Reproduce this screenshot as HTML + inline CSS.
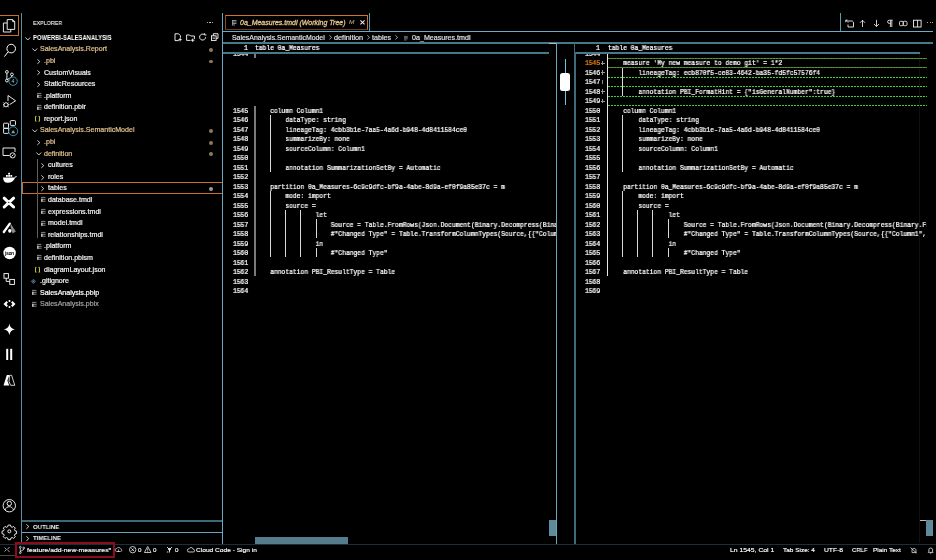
<!DOCTYPE html>
<html><head><meta charset="utf-8"><title>0a_Measures.tmdl (Working Tree)</title>
<style>
html,body{margin:0;padding:0;background:#000;width:936px;height:560px;overflow:hidden}
body{position:relative;font-family:"Liberation Sans",sans-serif;font-kerning:none}
div,svg{position:absolute;box-sizing:border-box}
svg{overflow:visible}
.t{will-change:transform}
</style></head><body>
<div style="left:21px;top:13px;width:1px;height:531px;background:#5a8fa3"></div>
<div style="left:222px;top:13px;width:1px;height:531px;background:#68a8c2"></div>
<div style="left:222px;top:31px;width:711px;height:1px;background:#68aec8"></div>
<div style="left:369px;top:13px;width:1px;height:18px;background:#5a9ab2"></div>
<div style="left:840px;top:13px;width:1px;height:18px;background:#5a9ab2"></div>
<div style="left:223px;top:42px;width:710px;height:1.7px;background:#47788c"></div>
<div style="left:556px;top:43px;width:1px;height:501px;background:#68a5be"></div>
<div style="left:574px;top:43px;width:1.6px;height:501px;background:#3f6a7c"></div>
<div style="left:22px;top:520.1px;width:200px;height:1.8px;background:#3d6878"></div>
<div style="left:22px;top:532px;width:200px;height:1px;background:#68a5bd"></div>
<div style="left:0px;top:544px;width:936px;height:1px;background:#1a3038"></div>
<div style="left:225px;top:15px;width:143px;height:14.5px;border:1px solid #cf7326;border-bottom-color:#6e3c14;border-left-color:#8a4c1c"></div>
<svg style="left:232px;top:20px" width="4.5" height="5" viewBox="0 0 4.5 5" fill="none" stroke="#9a9a9a" stroke-width="0.9"><path d="M0 0.5h4.5M0 2h4.5M0 3.5h4.5M0 5h3M0.5 0v5"/></svg>
<div class=t style="left:240.2px;top:16px;font:italic 400 6.69px/13.37px Liberation Sans;color:#e2c08d;white-space:pre;-webkit-text-stroke:0.3px #e2c08d;transform:scaleX(1.0450);transform-origin:0 0;">0a_Measures.tmdl (Working Tree)</div>
<div class=t style="left:349.2px;top:16.77px;font:italic 400 5.81px/11.63px Liberation Sans;color:#b09870;white-space:pre;-webkit-text-stroke:0.15px #b09870;transform:scaleX(1.1150);transform-origin:0 0;">M</div>
<svg style="left:360px;top:20.2px" width="5" height="4.8" viewBox="0 0 5 4.8" fill="none" stroke="#ececec" stroke-width="1.05"><path d="M0.4 0.4L4.6 4.4M4.6 0.4L0.4 4.4"/></svg>
<div class=t style="left:231.5px;top:31.99px;font:400 6.4px/12.79px Liberation Sans;color:#e6e6e6;white-space:pre;-webkit-text-stroke:0.15px #e6e6e6;transform:scaleX(1.0833);transform-origin:0 0;">SalesAnalysis.SemanticModel</div>
<svg style="left:328.5px;top:35.3px" width="3" height="4.8" viewBox="0 0 3 4.8" fill="none" stroke="#d0d0d0" stroke-width="0.75"><path d="M0.4 0.4L2.6 2.4L0.4 4.4"/></svg>
<div class=t style="left:333.9px;top:31.99px;font:400 6.4px/12.79px Liberation Sans;color:#e6e6e6;white-space:pre;-webkit-text-stroke:0.15px #e6e6e6;transform:scaleX(1.1406);transform-origin:0 0;">definition</div>
<svg style="left:367px;top:35.3px" width="3" height="4.8" viewBox="0 0 3 4.8" fill="none" stroke="#d0d0d0" stroke-width="0.75"><path d="M0.4 0.4L2.6 2.4L0.4 4.4"/></svg>
<div class=t style="left:372.2px;top:31.99px;font:400 6.4px/12.79px Liberation Sans;color:#e6e6e6;white-space:pre;-webkit-text-stroke:0.15px #e6e6e6;transform:scaleX(1.1133);transform-origin:0 0;">tables</div>
<svg style="left:395px;top:35.3px" width="3" height="4.8" viewBox="0 0 3 4.8" fill="none" stroke="#d0d0d0" stroke-width="0.75"><path d="M0.4 0.4L2.6 2.4L0.4 4.4"/></svg>
<svg style="left:404.4px;top:35.8px" width="3.8" height="4.4" viewBox="0 0 3.8 4.4" fill="none" stroke="#aaa" stroke-width="0.6"><path d="M0 0.4h3.8M0 1.6h3.8M0 2.8h3.8M0 4h2.6"/></svg>
<div class=t style="left:411.8px;top:31.99px;font:400 6.4px/12.79px Liberation Sans;color:#e6e6e6;white-space:pre;-webkit-text-stroke:0.15px #e6e6e6;transform:scaleX(1.1139);transform-origin:0 0;">0a_Measures.tmdl</div>
<svg style="left:844.5px;top:18.5px" width="9" height="9" viewBox="0 0 9 9" fill="none" stroke="#fff" stroke-width="0.85"><path d="M3 2h4.3l1.2 1.2V8H3V5.5"/><path d="M0.8 1.2L3.2 3.6M0.8 1.2h2M0.8 1.2v2"/></svg>
<svg style="left:858.6px;top:18.5px" width="7" height="9" viewBox="0 0 7 9" fill="none" stroke="#fff" stroke-width="0.8"><path d="M3.5 8V1.3M1 3.8l2.5-2.5L6 3.8"/></svg>
<svg style="left:872.8px;top:18.5px" width="7" height="9" viewBox="0 0 7 9" fill="none" stroke="#fff" stroke-width="0.8"><path d="M3.5 0.8v6.7M1 5l2.5 2.5L6 5"/></svg>
<svg style="left:886px;top:18.5px" width="7" height="9" viewBox="0 0 7 9" fill="none" stroke="#fff" stroke-width="0.8"><path d="M4.4 1.2v6.8M5.8 1.2v6.8M6.6 1.2H3.2a1.6 1.6 0 0 0 0 3.2h1.2"/></svg>
<svg style="left:899px;top:18.5px" width="9" height="9" viewBox="0 0 9 9" fill="none" stroke="#fff" stroke-width="0.8"><rect x="0.5" y="2.3" width="3.8" height="4.4" rx="1.1"/><rect x="4.2" y="2.3" width="3.8" height="4.4" rx="1.1"/></svg>
<svg style="left:913px;top:18.5px" width="9" height="9" viewBox="0 0 9 9" fill="none" stroke="#fff" stroke-width="0.85"><rect x="0.5" y="1.2" width="7.6" height="6.8"/><path d="M4.6 1.2v6.8"/></svg>
<div style="left:927.2px;top:21.8px;width:1.2px;height:1.2px;background:#ddd;border-radius:50%"></div>
<div style="left:929.5px;top:21.8px;width:1.2px;height:1.2px;background:#ddd;border-radius:50%"></div>
<div style="left:931.8px;top:21.8px;width:1.2px;height:1.2px;background:#ddd;border-radius:50%"></div>
<div style="left:223px;top:43px;width:333px;height:501px;overflow:hidden">
<div class=t style="left:9.84px;top:4.99px;font:400 6.76px/13.51px Liberation Mono;color:#fff;white-space:pre;-webkit-text-stroke:0.24px #fff;transform:scaleX(0.9350);transform-origin:0 0;">1544</div>
<div style="left:31.2px;top:5.78px;width:1.8px;height:9.48px;background:#7a7a7a"></div>
<div style="left:31.2px;top:62.66px;width:1.8px;height:170.64px;background:#7a7a7a"></div>
<div class=t style="left:9.84px;top:61.87px;font:400 6.76px/13.51px Liberation Mono;color:#fff;white-space:pre;-webkit-text-stroke:0.24px #fff;transform:scaleX(0.9350);transform-origin:0 0;">1545</div>
<div class=t style="left:32px;top:61.87px;font:400 6.76px/13.51px Liberation Mono;color:#fff;white-space:pre;-webkit-text-stroke:0.24px #fff;transform:scaleX(0.9350);transform-origin:0 0;">    column Column1</div>
<div class=t style="left:9.84px;top:71.35px;font:400 6.76px/13.51px Liberation Mono;color:#fff;white-space:pre;-webkit-text-stroke:0.24px #fff;transform:scaleX(0.9350);transform-origin:0 0;">1546</div>
<div class=t style="left:32px;top:71.35px;font:400 6.76px/13.51px Liberation Mono;color:#fff;white-space:pre;-webkit-text-stroke:0.24px #fff;transform:scaleX(0.9350);transform-origin:0 0;">        dataType: string</div>
<div class=t style="left:9.84px;top:80.83px;font:400 6.76px/13.51px Liberation Mono;color:#fff;white-space:pre;-webkit-text-stroke:0.24px #fff;transform:scaleX(0.9350);transform-origin:0 0;">1547</div>
<div class=t style="left:32px;top:80.83px;font:400 6.76px/13.51px Liberation Mono;color:#fff;white-space:pre;-webkit-text-stroke:0.24px #fff;transform:scaleX(0.9350);transform-origin:0 0;">        lineageTag: 4cbb3b1e-7aa5-4a6d-b948-4d8411584ce0</div>
<div class=t style="left:9.84px;top:90.31px;font:400 6.76px/13.51px Liberation Mono;color:#fff;white-space:pre;-webkit-text-stroke:0.24px #fff;transform:scaleX(0.9350);transform-origin:0 0;">1548</div>
<div class=t style="left:32px;top:90.31px;font:400 6.76px/13.51px Liberation Mono;color:#fff;white-space:pre;-webkit-text-stroke:0.24px #fff;transform:scaleX(0.9350);transform-origin:0 0;">        summarizeBy: none</div>
<div class=t style="left:9.84px;top:99.79px;font:400 6.76px/13.51px Liberation Mono;color:#fff;white-space:pre;-webkit-text-stroke:0.24px #fff;transform:scaleX(0.9350);transform-origin:0 0;">1549</div>
<div class=t style="left:32px;top:99.79px;font:400 6.76px/13.51px Liberation Mono;color:#fff;white-space:pre;-webkit-text-stroke:0.24px #fff;transform:scaleX(0.9350);transform-origin:0 0;">        sourceColumn: Column1</div>
<div class=t style="left:9.84px;top:109.27px;font:400 6.76px/13.51px Liberation Mono;color:#fff;white-space:pre;-webkit-text-stroke:0.24px #fff;transform:scaleX(0.9350);transform-origin:0 0;">1550</div>
<div class=t style="left:9.84px;top:118.75px;font:400 6.76px/13.51px Liberation Mono;color:#fff;white-space:pre;-webkit-text-stroke:0.24px #fff;transform:scaleX(0.9350);transform-origin:0 0;">1551</div>
<div class=t style="left:32px;top:118.75px;font:400 6.76px/13.51px Liberation Mono;color:#fff;white-space:pre;-webkit-text-stroke:0.24px #fff;transform:scaleX(0.9350);transform-origin:0 0;">        annotation SummarizationSetBy = Automatic</div>
<div class=t style="left:9.84px;top:128.23px;font:400 6.76px/13.51px Liberation Mono;color:#fff;white-space:pre;-webkit-text-stroke:0.24px #fff;transform:scaleX(0.9350);transform-origin:0 0;">1552</div>
<div class=t style="left:9.84px;top:137.71px;font:400 6.76px/13.51px Liberation Mono;color:#fff;white-space:pre;-webkit-text-stroke:0.24px #fff;transform:scaleX(0.9350);transform-origin:0 0;">1553</div>
<div class=t style="left:32px;top:137.71px;font:400 6.76px/13.51px Liberation Mono;color:#fff;white-space:pre;-webkit-text-stroke:0.24px #fff;transform:scaleX(0.9350);transform-origin:0 0;">    partition 0a_Measures-6c9c9dfc-bf9a-4abe-8d9a-ef0f9a85e37c = m</div>
<div class=t style="left:9.84px;top:147.19px;font:400 6.76px/13.51px Liberation Mono;color:#fff;white-space:pre;-webkit-text-stroke:0.24px #fff;transform:scaleX(0.9350);transform-origin:0 0;">1554</div>
<div class=t style="left:32px;top:147.19px;font:400 6.76px/13.51px Liberation Mono;color:#fff;white-space:pre;-webkit-text-stroke:0.24px #fff;transform:scaleX(0.9350);transform-origin:0 0;">        mode: import</div>
<div class=t style="left:9.84px;top:156.67px;font:400 6.76px/13.51px Liberation Mono;color:#fff;white-space:pre;-webkit-text-stroke:0.24px #fff;transform:scaleX(0.9350);transform-origin:0 0;">1555</div>
<div class=t style="left:32px;top:156.67px;font:400 6.76px/13.51px Liberation Mono;color:#fff;white-space:pre;-webkit-text-stroke:0.24px #fff;transform:scaleX(0.9350);transform-origin:0 0;">        source =</div>
<div class=t style="left:9.84px;top:166.15px;font:400 6.76px/13.51px Liberation Mono;color:#fff;white-space:pre;-webkit-text-stroke:0.24px #fff;transform:scaleX(0.9350);transform-origin:0 0;">1556</div>
<div class=t style="left:32px;top:166.15px;font:400 6.76px/13.51px Liberation Mono;color:#fff;white-space:pre;-webkit-text-stroke:0.24px #fff;transform:scaleX(0.9350);transform-origin:0 0;">                let</div>
<div class=t style="left:9.84px;top:175.63px;font:400 6.76px/13.51px Liberation Mono;color:#fff;white-space:pre;-webkit-text-stroke:0.24px #fff;transform:scaleX(0.9350);transform-origin:0 0;">1557</div>
<div class=t style="left:32px;top:175.63px;font:400 6.76px/13.51px Liberation Mono;color:#fff;white-space:pre;-webkit-text-stroke:0.24px #fff;transform:scaleX(0.9350);transform-origin:0 0;">                    Source = Table.FromRows(Json.Document(Binary.Decompress(Binary.FromText(&quot;i45WMlSK1YlWMjIDAA==&quot;, BinaryEncoding.Base64), Compression.Deflate)), let _t = ((type nullable text) meta [Serialized.Text = true]) in type table [Column1 = _t])</div>
<div class=t style="left:9.84px;top:185.11px;font:400 6.76px/13.51px Liberation Mono;color:#fff;white-space:pre;-webkit-text-stroke:0.24px #fff;transform:scaleX(0.9350);transform-origin:0 0;">1558</div>
<div class=t style="left:32px;top:185.11px;font:400 6.76px/13.51px Liberation Mono;color:#fff;white-space:pre;-webkit-text-stroke:0.24px #fff;transform:scaleX(0.9350);transform-origin:0 0;">                    #&quot;Changed Type&quot; = Table.TransformColumnTypes(Source,{{&quot;Column1&quot;, type text}})</div>
<div class=t style="left:9.84px;top:194.59px;font:400 6.76px/13.51px Liberation Mono;color:#fff;white-space:pre;-webkit-text-stroke:0.24px #fff;transform:scaleX(0.9350);transform-origin:0 0;">1559</div>
<div class=t style="left:32px;top:194.59px;font:400 6.76px/13.51px Liberation Mono;color:#fff;white-space:pre;-webkit-text-stroke:0.24px #fff;transform:scaleX(0.9350);transform-origin:0 0;">                in</div>
<div class=t style="left:9.84px;top:204.07px;font:400 6.76px/13.51px Liberation Mono;color:#fff;white-space:pre;-webkit-text-stroke:0.24px #fff;transform:scaleX(0.9350);transform-origin:0 0;">1560</div>
<div class=t style="left:32px;top:204.07px;font:400 6.76px/13.51px Liberation Mono;color:#fff;white-space:pre;-webkit-text-stroke:0.24px #fff;transform:scaleX(0.9350);transform-origin:0 0;">                    #&quot;Changed Type&quot;</div>
<div class=t style="left:9.84px;top:213.55px;font:400 6.76px/13.51px Liberation Mono;color:#fff;white-space:pre;-webkit-text-stroke:0.24px #fff;transform:scaleX(0.9350);transform-origin:0 0;">1561</div>
<div class=t style="left:9.84px;top:223.03px;font:400 6.76px/13.51px Liberation Mono;color:#fff;white-space:pre;-webkit-text-stroke:0.24px #fff;transform:scaleX(0.9350);transform-origin:0 0;">1562</div>
<div class=t style="left:32px;top:223.03px;font:400 6.76px/13.51px Liberation Mono;color:#fff;white-space:pre;-webkit-text-stroke:0.24px #fff;transform:scaleX(0.9350);transform-origin:0 0;">    annotation PBI_ResultType = Table</div>
<div class=t style="left:9.84px;top:232.51px;font:400 6.76px/13.51px Liberation Mono;color:#fff;white-space:pre;-webkit-text-stroke:0.24px #fff;transform:scaleX(0.9350);transform-origin:0 0;">1563</div>
<div class=t style="left:9.84px;top:241.99px;font:400 6.76px/13.51px Liberation Mono;color:#fff;white-space:pre;-webkit-text-stroke:0.24px #fff;transform:scaleX(0.9350);transform-origin:0 0;">1564</div>
<div style="left:47.06px;top:72.14px;width:0.9px;height:56.88px;background:#d8d8d8"></div>
<div style="left:47.06px;top:147.98px;width:0.9px;height:66.36px;background:#d8d8d8"></div>
<div style="left:62.22px;top:166.94px;width:0.9px;height:47.4px;background:#d8d8d8"></div>
<div style="left:77.38px;top:166.94px;width:0.9px;height:47.4px;background:#d8d8d8"></div>
<div style="left:92.54px;top:176.42px;width:0.9px;height:18.96px;background:#d8d8d8"></div>
<div style="left:92.54px;top:204.86px;width:0.9px;height:9.48px;background:#d8d8d8"></div>
<div style="left:0px;top:0.7px;width:333px;height:8.3px;background:#000"></div>
<div class=t style="left:21.21px;top:-0.69px;font:400 6.76px/13.51px Liberation Mono;color:#fff;white-space:pre;-webkit-text-stroke:0.24px #fff;transform:scaleX(0.9350);transform-origin:0 0;">1</div>
<div class=t style="left:32px;top:-0.69px;font:400 6.76px/13.51px Liberation Mono;color:#fff;white-space:pre;-webkit-text-stroke:0.24px #fff;transform:scaleX(0.9350);transform-origin:0 0;">table 0a_Measures</div>
</div>
<div style="left:223px;top:52px;width:326px;height:1.8px;background:#47788c"></div>
<div style="left:919px;top:53px;width:0.6px;height:490px;background:#101010"></div>
<div style="left:575px;top:43px;width:352px;height:501px;overflow:hidden">
<div class=t style="left:9.94px;top:4.99px;font:400 6.76px/13.51px Liberation Mono;color:#fff;white-space:pre;-webkit-text-stroke:0.24px #fff;transform:scaleX(0.9350);transform-origin:0 0;">1544</div>
<div class=t style="left:9.94px;top:14.47px;font:400 6.76px/13.51px Liberation Mono;color:#f38518;white-space:pre;-webkit-text-stroke:0.24px #f38518;transform:scaleX(0.9350);transform-origin:0 0;">1545</div>
<div class=t style="left:32.6px;top:14.47px;font:400 6.76px/13.51px Liberation Mono;color:#fff;white-space:pre;-webkit-text-stroke:0.24px #fff;transform:scaleX(0.9350);transform-origin:0 0;">    measure &#x27;My new measure to demo git&#x27; = 1*2</div>
<div class=t style="left:9.94px;top:23.95px;font:400 6.76px/13.51px Liberation Mono;color:#fff;white-space:pre;-webkit-text-stroke:0.24px #fff;transform:scaleX(0.9350);transform-origin:0 0;">1546</div>
<div class=t style="left:32.6px;top:23.95px;font:400 6.76px/13.51px Liberation Mono;color:#fff;white-space:pre;-webkit-text-stroke:0.24px #fff;transform:scaleX(0.9350);transform-origin:0 0;">        lineageTag: ecb870f5-ce83-4642-ba35-fd5fc57576f4</div>
<div class=t style="left:9.94px;top:33.43px;font:400 6.76px/13.51px Liberation Mono;color:#fff;white-space:pre;-webkit-text-stroke:0.24px #fff;transform:scaleX(0.9350);transform-origin:0 0;">1547</div>
<div class=t style="left:9.94px;top:42.91px;font:400 6.76px/13.51px Liberation Mono;color:#fff;white-space:pre;-webkit-text-stroke:0.24px #fff;transform:scaleX(0.9350);transform-origin:0 0;">1548</div>
<div class=t style="left:32.6px;top:42.91px;font:400 6.76px/13.51px Liberation Mono;color:#fff;white-space:pre;-webkit-text-stroke:0.24px #fff;transform:scaleX(0.9350);transform-origin:0 0;">        annotation PBI_FormatHint = {&quot;isGeneralNumber&quot;:true}</div>
<div class=t style="left:9.94px;top:52.39px;font:400 6.76px/13.51px Liberation Mono;color:#fff;white-space:pre;-webkit-text-stroke:0.24px #fff;transform:scaleX(0.9350);transform-origin:0 0;">1549</div>
<div class=t style="left:9.94px;top:61.87px;font:400 6.76px/13.51px Liberation Mono;color:#fff;white-space:pre;-webkit-text-stroke:0.24px #fff;transform:scaleX(0.9350);transform-origin:0 0;">1550</div>
<div class=t style="left:32.6px;top:61.87px;font:400 6.76px/13.51px Liberation Mono;color:#fff;white-space:pre;-webkit-text-stroke:0.24px #fff;transform:scaleX(0.9350);transform-origin:0 0;">    column Column1</div>
<div class=t style="left:9.94px;top:71.35px;font:400 6.76px/13.51px Liberation Mono;color:#fff;white-space:pre;-webkit-text-stroke:0.24px #fff;transform:scaleX(0.9350);transform-origin:0 0;">1551</div>
<div class=t style="left:32.6px;top:71.35px;font:400 6.76px/13.51px Liberation Mono;color:#fff;white-space:pre;-webkit-text-stroke:0.24px #fff;transform:scaleX(0.9350);transform-origin:0 0;">        dataType: string</div>
<div class=t style="left:9.94px;top:80.83px;font:400 6.76px/13.51px Liberation Mono;color:#fff;white-space:pre;-webkit-text-stroke:0.24px #fff;transform:scaleX(0.9350);transform-origin:0 0;">1552</div>
<div class=t style="left:32.6px;top:80.83px;font:400 6.76px/13.51px Liberation Mono;color:#fff;white-space:pre;-webkit-text-stroke:0.24px #fff;transform:scaleX(0.9350);transform-origin:0 0;">        lineageTag: 4cbb3b1e-7aa5-4a6d-b948-4d8411584ce0</div>
<div class=t style="left:9.94px;top:90.31px;font:400 6.76px/13.51px Liberation Mono;color:#fff;white-space:pre;-webkit-text-stroke:0.24px #fff;transform:scaleX(0.9350);transform-origin:0 0;">1553</div>
<div class=t style="left:32.6px;top:90.31px;font:400 6.76px/13.51px Liberation Mono;color:#fff;white-space:pre;-webkit-text-stroke:0.24px #fff;transform:scaleX(0.9350);transform-origin:0 0;">        summarizeBy: none</div>
<div class=t style="left:9.94px;top:99.79px;font:400 6.76px/13.51px Liberation Mono;color:#fff;white-space:pre;-webkit-text-stroke:0.24px #fff;transform:scaleX(0.9350);transform-origin:0 0;">1554</div>
<div class=t style="left:32.6px;top:99.79px;font:400 6.76px/13.51px Liberation Mono;color:#fff;white-space:pre;-webkit-text-stroke:0.24px #fff;transform:scaleX(0.9350);transform-origin:0 0;">        sourceColumn: Column1</div>
<div class=t style="left:9.94px;top:109.27px;font:400 6.76px/13.51px Liberation Mono;color:#fff;white-space:pre;-webkit-text-stroke:0.24px #fff;transform:scaleX(0.9350);transform-origin:0 0;">1555</div>
<div class=t style="left:9.94px;top:118.75px;font:400 6.76px/13.51px Liberation Mono;color:#fff;white-space:pre;-webkit-text-stroke:0.24px #fff;transform:scaleX(0.9350);transform-origin:0 0;">1556</div>
<div class=t style="left:32.6px;top:118.75px;font:400 6.76px/13.51px Liberation Mono;color:#fff;white-space:pre;-webkit-text-stroke:0.24px #fff;transform:scaleX(0.9350);transform-origin:0 0;">        annotation SummarizationSetBy = Automatic</div>
<div class=t style="left:9.94px;top:128.23px;font:400 6.76px/13.51px Liberation Mono;color:#fff;white-space:pre;-webkit-text-stroke:0.24px #fff;transform:scaleX(0.9350);transform-origin:0 0;">1557</div>
<div class=t style="left:9.94px;top:137.71px;font:400 6.76px/13.51px Liberation Mono;color:#fff;white-space:pre;-webkit-text-stroke:0.24px #fff;transform:scaleX(0.9350);transform-origin:0 0;">1558</div>
<div class=t style="left:32.6px;top:137.71px;font:400 6.76px/13.51px Liberation Mono;color:#fff;white-space:pre;-webkit-text-stroke:0.24px #fff;transform:scaleX(0.9350);transform-origin:0 0;">    partition 0a_Measures-6c9c9dfc-bf9a-4abe-8d9a-ef0f9a85e37c = m</div>
<div class=t style="left:9.94px;top:147.19px;font:400 6.76px/13.51px Liberation Mono;color:#fff;white-space:pre;-webkit-text-stroke:0.24px #fff;transform:scaleX(0.9350);transform-origin:0 0;">1559</div>
<div class=t style="left:32.6px;top:147.19px;font:400 6.76px/13.51px Liberation Mono;color:#fff;white-space:pre;-webkit-text-stroke:0.24px #fff;transform:scaleX(0.9350);transform-origin:0 0;">        mode: import</div>
<div class=t style="left:9.94px;top:156.67px;font:400 6.76px/13.51px Liberation Mono;color:#fff;white-space:pre;-webkit-text-stroke:0.24px #fff;transform:scaleX(0.9350);transform-origin:0 0;">1560</div>
<div class=t style="left:32.6px;top:156.67px;font:400 6.76px/13.51px Liberation Mono;color:#fff;white-space:pre;-webkit-text-stroke:0.24px #fff;transform:scaleX(0.9350);transform-origin:0 0;">        source =</div>
<div class=t style="left:9.94px;top:166.15px;font:400 6.76px/13.51px Liberation Mono;color:#fff;white-space:pre;-webkit-text-stroke:0.24px #fff;transform:scaleX(0.9350);transform-origin:0 0;">1561</div>
<div class=t style="left:32.6px;top:166.15px;font:400 6.76px/13.51px Liberation Mono;color:#fff;white-space:pre;-webkit-text-stroke:0.24px #fff;transform:scaleX(0.9350);transform-origin:0 0;">                let</div>
<div class=t style="left:9.94px;top:175.63px;font:400 6.76px/13.51px Liberation Mono;color:#fff;white-space:pre;-webkit-text-stroke:0.24px #fff;transform:scaleX(0.9350);transform-origin:0 0;">1562</div>
<div class=t style="left:32.6px;top:175.63px;font:400 6.76px/13.51px Liberation Mono;color:#fff;white-space:pre;-webkit-text-stroke:0.24px #fff;transform:scaleX(0.9350);transform-origin:0 0;">                    Source = Table.FromRows(Json.Document(Binary.Decompress(Binary.FromText(&quot;i45WMlSK1YlWMjIDAA==&quot;, BinaryEncoding.Base64), Compression.Deflate)), let _t = ((type nullable text) meta [Serialized.Text = true]) in type table [Column1 = _t])</div>
<div class=t style="left:9.94px;top:185.11px;font:400 6.76px/13.51px Liberation Mono;color:#fff;white-space:pre;-webkit-text-stroke:0.24px #fff;transform:scaleX(0.9350);transform-origin:0 0;">1563</div>
<div class=t style="left:32.6px;top:185.11px;font:400 6.76px/13.51px Liberation Mono;color:#fff;white-space:pre;-webkit-text-stroke:0.24px #fff;transform:scaleX(0.9350);transform-origin:0 0;">                    #&quot;Changed Type&quot; = Table.TransformColumnTypes(Source,{{&quot;Column1&quot;, type text}})</div>
<div class=t style="left:9.94px;top:194.59px;font:400 6.76px/13.51px Liberation Mono;color:#fff;white-space:pre;-webkit-text-stroke:0.24px #fff;transform:scaleX(0.9350);transform-origin:0 0;">1564</div>
<div class=t style="left:32.6px;top:194.59px;font:400 6.76px/13.51px Liberation Mono;color:#fff;white-space:pre;-webkit-text-stroke:0.24px #fff;transform:scaleX(0.9350);transform-origin:0 0;">                in</div>
<div class=t style="left:9.94px;top:204.07px;font:400 6.76px/13.51px Liberation Mono;color:#fff;white-space:pre;-webkit-text-stroke:0.24px #fff;transform:scaleX(0.9350);transform-origin:0 0;">1565</div>
<div class=t style="left:32.6px;top:204.07px;font:400 6.76px/13.51px Liberation Mono;color:#fff;white-space:pre;-webkit-text-stroke:0.24px #fff;transform:scaleX(0.9350);transform-origin:0 0;">                    #&quot;Changed Type&quot;</div>
<div class=t style="left:9.94px;top:213.55px;font:400 6.76px/13.51px Liberation Mono;color:#fff;white-space:pre;-webkit-text-stroke:0.24px #fff;transform:scaleX(0.9350);transform-origin:0 0;">1566</div>
<div class=t style="left:9.94px;top:223.03px;font:400 6.76px/13.51px Liberation Mono;color:#fff;white-space:pre;-webkit-text-stroke:0.24px #fff;transform:scaleX(0.9350);transform-origin:0 0;">1567</div>
<div class=t style="left:32.6px;top:223.03px;font:400 6.76px/13.51px Liberation Mono;color:#fff;white-space:pre;-webkit-text-stroke:0.24px #fff;transform:scaleX(0.9350);transform-origin:0 0;">    annotation PBI_ResultType = Table</div>
<div class=t style="left:9.94px;top:232.51px;font:400 6.76px/13.51px Liberation Mono;color:#fff;white-space:pre;-webkit-text-stroke:0.24px #fff;transform:scaleX(0.9350);transform-origin:0 0;">1568</div>
<div class=t style="left:9.94px;top:241.99px;font:400 6.76px/13.51px Liberation Mono;color:#fff;white-space:pre;-webkit-text-stroke:0.24px #fff;transform:scaleX(0.9350);transform-origin:0 0;">1569</div>
<div style="left:25.5px;top:19.66px;width:4.2px;height:0.6px;background:#999"></div>
<div style="left:27.3px;top:17.66px;width:0.6px;height:4.8px;background:#999"></div>
<div style="left:25.5px;top:29.14px;width:4.2px;height:0.6px;background:#999"></div>
<div style="left:27.3px;top:27.14px;width:0.6px;height:4.8px;background:#999"></div>
<div style="left:25.5px;top:48.1px;width:4.2px;height:0.6px;background:#999"></div>
<div style="left:27.3px;top:46.1px;width:0.6px;height:4.8px;background:#999"></div>
<div style="left:25.5px;top:57.58px;width:4.2px;height:0.6px;background:#999"></div>
<div style="left:27.3px;top:55.58px;width:0.6px;height:4.8px;background:#999"></div>
<div style="left:27.3px;top:36.82px;width:0.6px;height:4.4px;background:#888"></div>
<div style="left:47.16px;top:24.74px;width:0.9px;height:28.44px;background:#d8d8d8"></div>
<div style="left:47.16px;top:72.14px;width:0.9px;height:56.88px;background:#d8d8d8"></div>
<div style="left:47.16px;top:147.98px;width:0.9px;height:66.36px;background:#d8d8d8"></div>
<div style="left:62.32px;top:166.94px;width:0.9px;height:47.4px;background:#d8d8d8"></div>
<div style="left:77.48px;top:166.94px;width:0.9px;height:47.4px;background:#d8d8d8"></div>
<div style="left:92.64px;top:176.42px;width:0.9px;height:18.96px;background:#d8d8d8"></div>
<div style="left:92.64px;top:204.86px;width:0.9px;height:9.48px;background:#d8d8d8"></div>
<div style="left:32.1px;top:10px;width:1px;height:223.3px;background:#e8e8e8"></div>
<div style="left:32.5px;top:14.76px;width:319.5px;height:1px;background:repeating-linear-gradient(90deg,#33a830 0 1.6px,#9a4a18 1.6px 3px)"></div>
<div style="left:32.5px;top:24.24px;width:319.5px;height:1px;background:repeating-linear-gradient(90deg,#33a830 0 1.6px,#9a4a18 1.6px 3px)"></div>
<div style="left:32.5px;top:33.72px;width:319.5px;height:1px;background:repeating-linear-gradient(90deg,#3ad436 0 1.8px,transparent 1.8px 3px)"></div>
<div style="left:32.5px;top:43.2px;width:319.5px;height:1px;background:repeating-linear-gradient(90deg,#3ad436 0 1.8px,transparent 1.8px 3px)"></div>
<div style="left:32.5px;top:52.68px;width:319.5px;height:1px;background:repeating-linear-gradient(90deg,#3ad436 0 1.8px,transparent 1.8px 3px)"></div>
<div style="left:32.5px;top:62.16px;width:319.5px;height:1px;background:repeating-linear-gradient(90deg,#3ad436 0 1.8px,transparent 1.8px 3px)"></div>
<div style="left:0px;top:0.7px;width:352px;height:8.3px;background:#000"></div>
<div class=t style="left:21.31px;top:-0.69px;font:400 6.76px/13.51px Liberation Mono;color:#fff;white-space:pre;-webkit-text-stroke:0.24px #fff;transform:scaleX(0.9350);transform-origin:0 0;">1</div>
<div class=t style="left:32.6px;top:-0.69px;font:400 6.76px/13.51px Liberation Mono;color:#fff;white-space:pre;-webkit-text-stroke:0.24px #fff;transform:scaleX(0.9350);transform-origin:0 0;">table 0a_Measures</div>
</div>
<div style="left:575.6px;top:52px;width:344.4px;height:1.8px;background:#47788c"></div>
<div style="left:255px;top:537px;width:93.2px;height:6.6px;background:#557d8d"></div>
<div style="left:549px;top:520px;width:7px;height:16px;background:#5f8a9c"></div>
<div style="left:549px;top:43px;width:7px;height:1.2px;background:#bbb"></div>
<div style="left:926.2px;top:520px;width:6.8px;height:15.8px;background:#5f8a9c"></div>
<div style="left:919.8px;top:519.6px;width:6.6px;height:1.2px;background:#bbb"></div>
<div style="left:565px;top:59px;width:1px;height:46px;background:#6fc3df"></div>
<div style="left:560.2px;top:72.7px;width:10.2px;height:18.5px;background:#fff;border-radius:2.5px"></div>
<div class=t style="left:32.9px;top:16.88px;font:400 6.25px/12.5px Liberation Sans;color:#e8e8e8;white-space:pre;-webkit-text-stroke:0.15px #e8e8e8;transform:scaleX(0.8578);transform-origin:0 0;">EXPLORER</div>
<div style="left:206.8px;top:21.9px;width:1.2px;height:1.2px;background:#ddd;border-radius:50%"></div>
<div style="left:209.4px;top:21.9px;width:1.2px;height:1.2px;background:#ddd;border-radius:50%"></div>
<div style="left:212px;top:21.9px;width:1.2px;height:1.2px;background:#ddd;border-radius:50%"></div>
<svg style="left:24.5px;top:36.51px" width="5.6" height="3.6" viewBox="0 0 5.6 3.6" fill="none" stroke="#d8d8d8" stroke-width="0.95"><path d="M0.4 0.5L2.8 3L5.2 0.5"/></svg>
<div class=t style="left:32.9px;top:30.9px;font:700 6.69px/13.37px Liberation Sans;color:#fff;white-space:pre;transform:scaleX(0.8752);transform-origin:0 0;">POWERBI-SALESANALYSIS</div>
<svg style="left:173.6px;top:33.2px" width="8" height="8.6" viewBox="0 0 8 8.6" fill="none" stroke="#fff" stroke-width="0.9"><path d="M4.8 7.6H1V0.8h3.6L6.4 2.6v2.2"/><path d="M4.5 6.6h3.2M6.1 5v3.3"/></svg>
<svg style="left:185.6px;top:33.6px" width="9" height="8.4" viewBox="0 0 9 8.4" fill="none" stroke="#fff" stroke-width="0.9"><path d="M4.5 6.4H0.6V1h3l1 1h3.8v3"/><path d="M5 6.2h3.4M6.7 4.6v3.3"/></svg>
<svg style="left:198.6px;top:33.4px" width="7.6" height="8" viewBox="0 0 7.6 8" fill="none" stroke="#fff" stroke-width="0.9"><path d="M6.6 4.2a3 3 0 1 1-1.3-2.6"/><path d="M5.6 0.2v1.8h1.8"/></svg>
<svg style="left:211.2px;top:33.4px" width="7.6" height="8" viewBox="0 0 7.6 8" fill="none" stroke="#fff" stroke-width="0.9"><rect x="0.5" y="2.8" width="4.6" height="4.6"/><path d="M2.4 2.8V0.7h4.6v4.6H5.1M1.6 5.1h2.4"/></svg>
<div style="left:22.2px;top:182.2px;width:200px;height:11.4px;border:1px solid #c8702a;border-right:none"></div>
<div style="left:36.5px;top:158.6px;width:1px;height:79.8px;background:#606060"></div>
<svg style="left:31.8px;top:48.1px" width="5.6" height="3.6" viewBox="0 0 5.6 3.6" fill="none" stroke="#d8d8d8" stroke-width="0.95"><path d="M0.4 0.5L2.8 3L5.2 0.5"/></svg>
<div class=t style="left:39.7px;top:43.34px;font:400 6.47px/12.94px Liberation Sans;color:#e2c08d;white-space:pre;-webkit-text-stroke:0.2px #e2c08d;transform:scaleX(1.0900);transform-origin:0 0;">SalesAnalysis.Report</div>
<div style="left:209.2px;top:48px;width:3.8px;height:3.8px;background:#8a7a5a;border-radius:50%"></div>
<svg style="left:37.2px;top:58.89px" width="3.4" height="5.2" viewBox="0 0 3.4 5.2" fill="none" stroke="#d8d8d8" stroke-width="0.95"><path d="M0.4 0.4L2.8 2.6L0.4 4.8"/></svg>
<div class=t style="left:43.9px;top:54.93px;font:400 6.47px/12.94px Liberation Sans;color:#e2c08d;white-space:pre;-webkit-text-stroke:0.2px #e2c08d;transform:scaleX(1.0900);transform-origin:0 0;">.pbi</div>
<div style="left:209.2px;top:59.59px;width:3.8px;height:3.8px;background:#8a7a5a;border-radius:50%"></div>
<svg style="left:37.2px;top:70.48px" width="3.4" height="5.2" viewBox="0 0 3.4 5.2" fill="none" stroke="#d8d8d8" stroke-width="0.95"><path d="M0.4 0.4L2.8 2.6L0.4 4.8"/></svg>
<div class=t style="left:43.9px;top:66.52px;font:400 6.47px/12.94px Liberation Sans;color:#f0f0f0;white-space:pre;-webkit-text-stroke:0.2px #f0f0f0;transform:scaleX(1.0900);transform-origin:0 0;">CustomVisuals</div>
<svg style="left:37.2px;top:82.07px" width="3.4" height="5.2" viewBox="0 0 3.4 5.2" fill="none" stroke="#d8d8d8" stroke-width="0.95"><path d="M0.4 0.4L2.8 2.6L0.4 4.8"/></svg>
<div class=t style="left:43.9px;top:78.11px;font:400 6.47px/12.94px Liberation Sans;color:#f0f0f0;white-space:pre;-webkit-text-stroke:0.2px #f0f0f0;transform:scaleX(1.0900);transform-origin:0 0;">StaticResources</div>
<svg style="left:36.7px;top:93.06px" width="4.6" height="4.8" viewBox="0 0 4.6 4.8" fill="none" stroke="#a8a8a8" stroke-width="0.8"><path d="M0 0.4h4.4M0 2.3h4.6M0 4.2h4.6" stroke-width="0.8"/><rect x="0" y="1.8" width="1.6" height="2.9" fill="#bbb" stroke="none"/></svg>
<div class=t style="left:43.9px;top:89.7px;font:400 6.47px/12.94px Liberation Sans;color:#f0f0f0;white-space:pre;-webkit-text-stroke:0.2px #f0f0f0;transform:scaleX(1.0900);transform-origin:0 0;">.platform</div>
<svg style="left:36.7px;top:104.65px" width="4.6" height="4.8" viewBox="0 0 4.6 4.8" fill="none" stroke="#a8a8a8" stroke-width="0.8"><path d="M0 0.4h4.4M0 2.3h4.6M0 4.2h4.6" stroke-width="0.8"/><rect x="0" y="1.8" width="1.6" height="2.9" fill="#bbb" stroke="none"/></svg>
<div class=t style="left:43.9px;top:101.29px;font:400 6.47px/12.94px Liberation Sans;color:#f0f0f0;white-space:pre;-webkit-text-stroke:0.2px #f0f0f0;transform:scaleX(1.0900);transform-origin:0 0;">definition.pbir</div>
<svg style="left:34.6px;top:116.14px" width="5" height="5.6" viewBox="0 0 5 5.6" fill="none" stroke="#e0dc50" stroke-width="0.85"><path d="M1.5 0.4H0.5V5.2H1.5M3.5 0.4H4.5V5.2H3.5"/></svg>
<div class=t style="left:43.9px;top:112.88px;font:400 6.47px/12.94px Liberation Sans;color:#f0f0f0;white-space:pre;-webkit-text-stroke:0.2px #f0f0f0;transform:scaleX(1.0900);transform-origin:0 0;">report.json</div>
<svg style="left:31.8px;top:129.23px" width="5.6" height="3.6" viewBox="0 0 5.6 3.6" fill="none" stroke="#d8d8d8" stroke-width="0.95"><path d="M0.4 0.5L2.8 3L5.2 0.5"/></svg>
<div class=t style="left:39.7px;top:124.47px;font:400 6.47px/12.94px Liberation Sans;color:#e2c08d;white-space:pre;-webkit-text-stroke:0.2px #e2c08d;transform:scaleX(1.0900);transform-origin:0 0;">SalesAnalysis.SemanticModel</div>
<div style="left:209.2px;top:129.13px;width:3.8px;height:3.8px;background:#8a7a5a;border-radius:50%"></div>
<svg style="left:37.2px;top:140.02px" width="3.4" height="5.2" viewBox="0 0 3.4 5.2" fill="none" stroke="#d8d8d8" stroke-width="0.95"><path d="M0.4 0.4L2.8 2.6L0.4 4.8"/></svg>
<div class=t style="left:43.9px;top:136.06px;font:400 6.47px/12.94px Liberation Sans;color:#e2c08d;white-space:pre;-webkit-text-stroke:0.2px #e2c08d;transform:scaleX(1.0900);transform-origin:0 0;">.pbi</div>
<div style="left:209.2px;top:140.72px;width:3.8px;height:3.8px;background:#8a7a5a;border-radius:50%"></div>
<svg style="left:35.8px;top:152.41px" width="5.6" height="3.6" viewBox="0 0 5.6 3.6" fill="none" stroke="#d8d8d8" stroke-width="0.95"><path d="M0.4 0.5L2.8 3L5.2 0.5"/></svg>
<div class=t style="left:43.9px;top:147.65px;font:400 6.47px/12.94px Liberation Sans;color:#e2c08d;white-space:pre;-webkit-text-stroke:0.2px #e2c08d;transform:scaleX(1.0900);transform-origin:0 0;">definition</div>
<div style="left:209.2px;top:152.31px;width:3.8px;height:3.8px;background:#8a7a5a;border-radius:50%"></div>
<svg style="left:41.3px;top:163.2px" width="3.4" height="5.2" viewBox="0 0 3.4 5.2" fill="none" stroke="#d8d8d8" stroke-width="0.95"><path d="M0.4 0.4L2.8 2.6L0.4 4.8"/></svg>
<div class=t style="left:48.1px;top:159.24px;font:400 6.47px/12.94px Liberation Sans;color:#f0f0f0;white-space:pre;-webkit-text-stroke:0.2px #f0f0f0;transform:scaleX(1.0900);transform-origin:0 0;">cultures</div>
<svg style="left:41.3px;top:174.79px" width="3.4" height="5.2" viewBox="0 0 3.4 5.2" fill="none" stroke="#d8d8d8" stroke-width="0.95"><path d="M0.4 0.4L2.8 2.6L0.4 4.8"/></svg>
<div class=t style="left:48.1px;top:170.83px;font:400 6.47px/12.94px Liberation Sans;color:#f0f0f0;white-space:pre;-webkit-text-stroke:0.2px #f0f0f0;transform:scaleX(1.0900);transform-origin:0 0;">roles</div>
<svg style="left:41.3px;top:186.38px" width="3.4" height="5.2" viewBox="0 0 3.4 5.2" fill="none" stroke="#d8d8d8" stroke-width="0.95"><path d="M0.4 0.4L2.8 2.6L0.4 4.8"/></svg>
<div class=t style="left:48.1px;top:182.42px;font:400 6.47px/12.94px Liberation Sans;color:#f0f0f0;white-space:pre;-webkit-text-stroke:0.2px #f0f0f0;transform:scaleX(1.0900);transform-origin:0 0;">tables</div>
<div style="left:209.2px;top:187.08px;width:3.8px;height:3.8px;background:#9a9a9a;border-radius:50%"></div>
<svg style="left:40.9px;top:197.37px" width="4.6" height="4.8" viewBox="0 0 4.6 4.8" fill="none" stroke="#a8a8a8" stroke-width="0.8"><path d="M0 0.4h4.4M0 2.3h4.6M0 4.2h4.6" stroke-width="0.8"/><rect x="0" y="1.8" width="1.6" height="2.9" fill="#bbb" stroke="none"/></svg>
<div class=t style="left:48.2px;top:194.01px;font:400 6.47px/12.94px Liberation Sans;color:#f0f0f0;white-space:pre;-webkit-text-stroke:0.2px #f0f0f0;transform:scaleX(1.0900);transform-origin:0 0;">database.tmdl</div>
<svg style="left:40.9px;top:208.96px" width="4.6" height="4.8" viewBox="0 0 4.6 4.8" fill="none" stroke="#a8a8a8" stroke-width="0.8"><path d="M0 0.4h4.4M0 2.3h4.6M0 4.2h4.6" stroke-width="0.8"/><rect x="0" y="1.8" width="1.6" height="2.9" fill="#bbb" stroke="none"/></svg>
<div class=t style="left:48.2px;top:205.6px;font:400 6.47px/12.94px Liberation Sans;color:#f0f0f0;white-space:pre;-webkit-text-stroke:0.2px #f0f0f0;transform:scaleX(1.0900);transform-origin:0 0;">expressions.tmdl</div>
<svg style="left:40.9px;top:220.55px" width="4.6" height="4.8" viewBox="0 0 4.6 4.8" fill="none" stroke="#a8a8a8" stroke-width="0.8"><path d="M0 0.4h4.4M0 2.3h4.6M0 4.2h4.6" stroke-width="0.8"/><rect x="0" y="1.8" width="1.6" height="2.9" fill="#bbb" stroke="none"/></svg>
<div class=t style="left:48.2px;top:217.19px;font:400 6.47px/12.94px Liberation Sans;color:#f0f0f0;white-space:pre;-webkit-text-stroke:0.2px #f0f0f0;transform:scaleX(1.0900);transform-origin:0 0;">model.tmdl</div>
<svg style="left:40.9px;top:232.14px" width="4.6" height="4.8" viewBox="0 0 4.6 4.8" fill="none" stroke="#a8a8a8" stroke-width="0.8"><path d="M0 0.4h4.4M0 2.3h4.6M0 4.2h4.6" stroke-width="0.8"/><rect x="0" y="1.8" width="1.6" height="2.9" fill="#bbb" stroke="none"/></svg>
<div class=t style="left:48.2px;top:228.78px;font:400 6.47px/12.94px Liberation Sans;color:#f0f0f0;white-space:pre;-webkit-text-stroke:0.2px #f0f0f0;transform:scaleX(1.0900);transform-origin:0 0;">relationships.tmdl</div>
<svg style="left:36.6px;top:243.73px" width="4.6" height="4.8" viewBox="0 0 4.6 4.8" fill="none" stroke="#a8a8a8" stroke-width="0.8"><path d="M0 0.4h4.4M0 2.3h4.6M0 4.2h4.6" stroke-width="0.8"/><rect x="0" y="1.8" width="1.6" height="2.9" fill="#bbb" stroke="none"/></svg>
<div class=t style="left:43.9px;top:240.37px;font:400 6.47px/12.94px Liberation Sans;color:#f0f0f0;white-space:pre;-webkit-text-stroke:0.2px #f0f0f0;transform:scaleX(1.0900);transform-origin:0 0;">.platform</div>
<svg style="left:36.6px;top:255.32px" width="4.6" height="4.8" viewBox="0 0 4.6 4.8" fill="none" stroke="#a8a8a8" stroke-width="0.8"><path d="M0 0.4h4.4M0 2.3h4.6M0 4.2h4.6" stroke-width="0.8"/><rect x="0" y="1.8" width="1.6" height="2.9" fill="#bbb" stroke="none"/></svg>
<div class=t style="left:43.9px;top:251.96px;font:400 6.47px/12.94px Liberation Sans;color:#f0f0f0;white-space:pre;-webkit-text-stroke:0.2px #f0f0f0;transform:scaleX(1.0900);transform-origin:0 0;">definition.pbism</div>
<svg style="left:34.6px;top:266.81px" width="5" height="5.6" viewBox="0 0 5 5.6" fill="none" stroke="#e0dc50" stroke-width="0.85"><path d="M1.5 0.4H0.5V5.2H1.5M3.5 0.4H4.5V5.2H3.5"/></svg>
<div class=t style="left:43.9px;top:263.55px;font:400 6.47px/12.94px Liberation Sans;color:#f0f0f0;white-space:pre;-webkit-text-stroke:0.2px #f0f0f0;transform:scaleX(1.0900);transform-origin:0 0;">diagramLayout.json</div>
<svg style="left:30.6px;top:279.3px" width="4.8" height="4.8" viewBox="0 0 4.8 4.8" fill="none" stroke="#6a8fa8" stroke-width="0.8"><path d="M2.4 0.3L4.5 2.4L2.4 4.5L0.3 2.4z"/><circle cx="2.4" cy="2.4" r="0.6" fill="#6a8fa8"/></svg>
<div class=t style="left:39.6px;top:275.14px;font:400 6.47px/12.94px Liberation Sans;color:#f0f0f0;white-space:pre;-webkit-text-stroke:0.2px #f0f0f0;transform:scaleX(1.0900);transform-origin:0 0;">.gitignore</div>
<svg style="left:31.9px;top:290.09px" width="4.6" height="4.8" viewBox="0 0 4.6 4.8" fill="none" stroke="#a8a8a8" stroke-width="0.8"><path d="M0 0.4h4.4M0 2.3h4.6M0 4.2h4.6" stroke-width="0.8"/><rect x="0" y="1.8" width="1.6" height="2.9" fill="#bbb" stroke="none"/></svg>
<div class=t style="left:39.6px;top:286.73px;font:400 6.47px/12.94px Liberation Sans;color:#ffffff;white-space:pre;-webkit-text-stroke:0.2px #ffffff;transform:scaleX(1.0900);transform-origin:0 0;">SalesAnalysis.pbip</div>
<svg style="left:31.9px;top:301.68px" width="4.6" height="4.8" viewBox="0 0 4.6 4.8" fill="none" stroke="#a8a8a8" stroke-width="0.8"><path d="M0 0.4h4.4M0 2.3h4.6M0 4.2h4.6" stroke-width="0.8"/><rect x="0" y="1.8" width="1.6" height="2.9" fill="#bbb" stroke="none"/></svg>
<div class=t style="left:39.6px;top:298.32px;font:400 6.47px/12.94px Liberation Sans;color:#a0a0a0;white-space:pre;-webkit-text-stroke:0.2px #a0a0a0;transform:scaleX(1.0900);transform-origin:0 0;">SalesAnalysis.pbix</div>
<svg style="left:25.6px;top:524.2px" width="3.4" height="5.2" viewBox="0 0 3.4 5.2" fill="none" stroke="#d8d8d8" stroke-width="0.95"><path d="M0.4 0.4L2.8 2.6L0.4 4.8"/></svg>
<div class=t style="left:32.5px;top:520.78px;font:700 6.25px/12.5px Liberation Sans;color:#f4f4f4;white-space:pre;transform:scaleX(0.9552);transform-origin:0 0;">OUTLINE</div>
<svg style="left:25.6px;top:535.5px" width="3.4" height="5.2" viewBox="0 0 3.4 5.2" fill="none" stroke="#d8d8d8" stroke-width="0.95"><path d="M0.4 0.4L2.8 2.6L0.4 4.8"/></svg>
<div class=t style="left:32.5px;top:532.08px;font:700 6.25px/12.5px Liberation Sans;color:#f4f4f4;white-space:pre;transform:scaleX(0.9600);transform-origin:0 0;">TIMELINE</div>
<div style="left:-1px;top:15.4px;width:20.4px;height:20.4px;border:1px solid #c8702a"></div>
<svg style="left:0px;top:0px" width="20" height="40" viewBox="0 0 20 40" fill="none" stroke="#fff" stroke-width="0.9"><path d="M7.2 19.6h5.5l2 2v7.8H7.2z"/><path d="M12.7 19.6v2h2"/><path d="M7.2 23H3.4v9h7.4v-2.6"/></svg>
<svg style="left:0px;top:40px" width="20" height="20" viewBox="0 0 20 20" fill="none" stroke="#fff" stroke-width="1"><circle cx="11.2" cy="8.6" r="4.3"/><path d="M8.2 11.8L4.4 16.6"/></svg>
<svg style="left:0px;top:65px" width="20" height="22" viewBox="0 0 20 22" fill="none" stroke="#fff" stroke-width="0.9"><circle cx="6.9" cy="6.9" r="1.4"/><circle cx="11.9" cy="9.4" r="1.4"/><circle cx="6.9" cy="15.6" r="1.4"/><path d="M6.9 8.3v5.9M11.9 10.8c0 2.5-4 2.5-4.5 4"/></svg>
<svg style="left:0px;top:65px" width="20" height="22" viewBox="0 0 20 22" fill="none" stroke="#fff" stroke-width="0.9"><circle cx="13.1" cy="16.2" r="4.2" fill="#000" stroke="#3f9fc4"/><text x="13.1" y="18.2" font-family="Liberation Sans" font-size="5.3" fill="#bbb" stroke="none" text-anchor="middle">4</text></svg>
<svg style="left:0px;top:90px" width="20" height="20" viewBox="0 0 20 20" fill="none" stroke="#fff" stroke-width="0.9"><path d="M8 5.5L15.6 10.8L9.6 14.6M8 5.5V11"/><circle cx="6" cy="14.8" r="2.1"/><path d="M3.4 12.6l1 1M8.6 12.6l-1 1M3 14.8h1M8 14.8h1M3.4 17l1-0.8M8.6 17l-1-0.8"/></svg>
<svg style="left:0px;top:115px" width="20" height="22" viewBox="0 0 20 22" fill="none" stroke="#fff" stroke-width="0.9"><rect x="10.3" y="5.6" width="5.2" height="4.8" rx="0.8"/><rect x="3.6" y="8.2" width="4.9" height="5.1" rx="0.6"/><rect x="3.6" y="13.3" width="4.9" height="5.1" rx="0.6"/></svg>
<svg style="left:0px;top:115px" width="20" height="22" viewBox="0 0 20 22" fill="none" stroke="#fff" stroke-width="0.9"><circle cx="13.2" cy="16.2" r="4.5" fill="#000" stroke="#3f9fc4"/><path d="M11.2 18.2l2-3.2l2 3.2z" fill="#999" stroke="none"/></svg>
<svg style="left:0px;top:140px" width="20" height="20" viewBox="0 0 20 20" fill="none" stroke="#fff" stroke-width="0.9"><path d="M9.5 15.5H3V8h12v4"/><circle cx="12.6" cy="15.4" r="2.6"/><path d="M11.5 16.5l2-2"/></svg>
<svg style="left:0px;top:166px" width="20" height="22" viewBox="0 0 20 22" fill="none" stroke="#fff" stroke-width="0.9"><path d="M3 11.5h11.5c0.5-1 1.5-1.5 2.5-1.2c-0.5 0.8-1 1.2-1.8 1.3c-1 3.5-4 5.2-7.5 5.2c-3 0-4.5-2-4.7-5.3z" fill="#fff" stroke="none"/><rect x="6" y="9" width="1.8" height="1.8" fill="#fff" stroke="none"/><rect x="8.2" y="9" width="1.8" height="1.8" fill="#fff" stroke="none"/><rect x="10.4" y="9" width="1.8" height="1.8" fill="#fff" stroke="none"/><rect x="8.2" y="6.8" width="1.8" height="1.8" fill="#fff" stroke="none"/></svg>
<svg style="left:0px;top:190px" width="20" height="25" viewBox="0 0 20 25" fill="none" stroke="#fff" stroke-width="0.9"><path d="M4.2 8.2L8.8 12.6L4.2 17M13.6 8.2L8.8 12.6L13.6 17" stroke-width="3" stroke-linecap="round" stroke-linejoin="round"/><circle cx="8.8" cy="12.4" r="0.7" fill="#333" stroke="none"/></svg>
<svg style="left:0px;top:215px" width="20" height="25" viewBox="0 0 20 25" fill="none" stroke="#fff" stroke-width="0.9"><path d="M3.8 17L9.8 8.6" stroke-width="2.3" stroke-linecap="round"/><path d="M10.6 8.6L15.8 16.4L12.6 18.4L10.6 12z" fill="#8a8a8a" stroke="none"/><ellipse cx="9.8" cy="15.8" rx="1.7" ry="1.9" fill="#fff" stroke="none"/></svg>
<svg style="left:0px;top:240px" width="20" height="25" viewBox="0 0 20 25" fill="none" stroke="#fff" stroke-width="0.9"><circle cx="9.6" cy="13" r="6.2" fill="#fff" stroke="none"/><text x="9.6" y="14.7" font-family="Liberation Sans" font-size="4.6" fill="#000" stroke="#000" stroke-width="0.15" text-anchor="middle" textLength="9" lengthAdjust="spacingAndGlyphs">json</text></svg>
<svg style="left:0px;top:265px" width="20" height="25" viewBox="0 0 20 25" fill="none" stroke="#fff" stroke-width="0.9"><rect x="4" y="8.6" width="4.4" height="4.6"/><rect x="9.8" y="14.4" width="4.6" height="5"/><path d="M6.2 13.2v3.2h3.6"/></svg>
<svg style="left:0px;top:290px" width="20" height="25" viewBox="0 0 20 25" fill="none" stroke="#fff" stroke-width="0.9"><path d="M6.5 11l-3 3l3 3l1.5-1.5l-1.5-1.5l1.5-1.5zM12.5 11l3 3l-3 3l-1.5-1.5l1.5-1.5l-1.5-1.5z" fill="#fff" stroke="none"/><circle cx="9.5" cy="11" r="1" fill="#fff" stroke="none"/><circle cx="9.5" cy="17" r="1" fill="#fff" stroke="none"/></svg>
<svg style="left:0px;top:315px" width="20" height="25" viewBox="0 0 20 25" fill="none" stroke="#fff" stroke-width="0.9"><path d="M9.4 8.5Q10 13.8 15 14.4Q10 15 9.4 20.3Q8.8 15 3.8 14.4Q8.8 13.8 9.4 8.5z" fill="#fff" stroke="none"/></svg>
<svg style="left:0px;top:340px" width="20" height="25" viewBox="0 0 20 25" fill="none" stroke="#fff" stroke-width="0.9"><rect x="6.2" y="8.8" width="2" height="11.2" fill="#fff" stroke="none"/><rect x="10.2" y="8.8" width="2" height="11.2" fill="#fff" stroke="none"/></svg>
<svg style="left:0px;top:365px" width="20" height="25" viewBox="0 0 20 25" fill="none" stroke="#fff" stroke-width="0.9"><path d="M3.5 20.5L6.8 10h2.6L7.4 15.5L9.2 20.5z" fill="#fff" stroke="none"/><path d="M9.6 10.3h2L14.8 20.3H10.6L9 16.5z" stroke-width="0.8"/></svg>
<svg style="left:0px;top:495px" width="20" height="20" viewBox="0 0 20 20" fill="none" stroke="#fff" stroke-width="0.9"><circle cx="9.3" cy="10.7" r="6.2"/><circle cx="9.3" cy="8.5" r="2.2"/><path d="M5 15c1-2.5 2.5-3.3 4.3-3.3s3.3 0.8 4.3 3.3"/></svg>
<svg style="left:0px;top:520px" width="20" height="22" viewBox="0 0 20 22" fill="none" stroke="#fff" stroke-width="0.9"><g transform="translate(9.3 11.3)"><path d="M-1.2-6.2h2.4l0.4 1.6l1.3 0.6l1.4-0.9l1.7 1.7l-0.9 1.4l0.6 1.3l1.6 0.4v2.4l-1.6 0.4l-0.6 1.3l0.9 1.4l-1.7 1.7l-1.4-0.9l-1.3 0.6l-0.4 1.6h-2.4l-0.4-1.6l-1.3-0.6l-1.4 0.9l-1.7-1.7l0.9-1.4l-0.6-1.3l-1.6-0.4v-2.4l1.6-0.4l0.6-1.3l-0.9-1.4l1.7-1.7l1.4 0.9l1.3-0.6z"/><circle r="1.5"/></g></svg>
<svg style="left:3px;top:546px" width="8" height="7" viewBox="0 0 8 7" fill="none" stroke="#c8c8c8" stroke-width="0.8"><path d="M1.5 1.5l2 2l-2 2M6.5 1l-2 2.3M6.5 6l-2-2.3"/></svg>
<div style="left:15.2px;top:542.3px;width:99.8px;height:15.4px;border:2.8px solid #8e0b1d"></div>
<svg style="left:18.6px;top:546px" width="6" height="8" viewBox="0 0 6 8" fill="none" stroke="#fff" stroke-width="0.7"><circle cx="1.3" cy="1.3" r="0.9"/><circle cx="1.3" cy="6.7" r="0.9"/><circle cx="4.7" cy="2" r="0.9"/><path d="M1.3 2.2v3.6M4.7 2.9c0 2-3.4 1.5-3.4 3"/></svg>
<div class=t style="left:27px;top:543.88px;font:400 6.25px/12.5px Liberation Sans;color:#fff;white-space:pre;-webkit-text-stroke:0.15px #fff;transform:scaleX(1.0917);transform-origin:0 0;">feature/add-new-measures*</div>
<svg style="left:115px;top:546.5px" width="7" height="6" viewBox="0 0 7 6" fill="none" stroke="#ddd" stroke-width="0.7"><path d="M1.5 4.5a1.5 1.5 0 0 1 0.3-3a2 2 0 0 1 3.7 0.3a1.3 1.3 0 0 1 0 2.7z"/><path d="M3.5 2.5v2.5M2.5 4l1 1l1-1"/></svg>
<svg style="left:128.6px;top:546.2px" width="7.4" height="7.4" viewBox="0 0 7.4 7.4" fill="none" stroke="#fff" stroke-width="0.75"><circle cx="3.7" cy="3.7" r="3.2"/><path d="M2.3 2.3l2.8 2.8M5.1 2.3l-2.8 2.8"/></svg>
<div class=t style="left:138.4px;top:543.88px;font:400 6.25px/12.5px Liberation Sans;color:#fff;white-space:pre;-webkit-text-stroke:0.15px #fff;">0</div>
<svg style="left:143.6px;top:546.2px" width="7.4" height="7" viewBox="0 0 7.4 7" fill="none" stroke="#fff" stroke-width="0.75"><path d="M3.7 0.5L7 6.5H0.4z"/><path d="M3.7 2.5v2.1M3.7 5.2v0.6"/></svg>
<div class=t style="left:153.4px;top:543.88px;font:400 6.25px/12.5px Liberation Sans;color:#fff;white-space:pre;-webkit-text-stroke:0.15px #fff;">0</div>
<svg style="left:166.2px;top:546.4px" width="7" height="7" viewBox="0 0 7 7" fill="none" stroke="#fff" stroke-width="0.8"><path d="M1 1l2 2M6 1l-2 2M3.5 3.5v3M0.8 6h1.6"/><circle cx="3.5" cy="3.3" r="0.9" fill="#fff"/></svg>
<div class=t style="left:175.2px;top:543.88px;font:400 6.25px/12.5px Liberation Sans;color:#fff;white-space:pre;-webkit-text-stroke:0.15px #fff;">0</div>
<svg style="left:186.8px;top:547px" width="7.6" height="5.4" viewBox="0 0 7.6 5.4" fill="none" stroke="#fff" stroke-width="0.75"><path d="M2 5a1.6 1.6 0 0 1 0-3.2a2.3 2.3 0 0 1 4.3 0.6a1.3 1.3 0 0 1 0 2.6z"/></svg>
<div class=t style="left:196.2px;top:543.88px;font:400 6.25px/12.5px Liberation Sans;color:#fff;white-space:pre;-webkit-text-stroke:0.15px #fff;transform:scaleX(1.0560);transform-origin:0 0;">Cloud Code - Sign in</div>
<div class=t style="left:730.4px;top:543.88px;font:400 6.25px/12.5px Liberation Sans;color:#fff;white-space:pre;-webkit-text-stroke:0.15px #fff;transform:scaleX(1.0896);transform-origin:0 0;">Ln 1545, Col 1</div>
<div class=t style="left:782.8px;top:543.88px;font:400 6.25px/12.5px Liberation Sans;color:#fff;white-space:pre;-webkit-text-stroke:0.15px #fff;transform:scaleX(1.0312);transform-origin:0 0;">Tab Size: 4</div>
<div class=t style="left:823.9px;top:543.88px;font:400 6.25px/12.5px Liberation Sans;color:#fff;white-space:pre;-webkit-text-stroke:0.15px #fff;transform:scaleX(1.0787);transform-origin:0 0;">UTF-8</div>
<div class=t style="left:851.6px;top:543.88px;font:400 6.25px/12.5px Liberation Sans;color:#fff;white-space:pre;-webkit-text-stroke:0.15px #fff;transform:scaleX(0.9497);transform-origin:0 0;">CRLF</div>
<div class=t style="left:873.1px;top:543.88px;font:400 6.25px/12.5px Liberation Sans;color:#fff;white-space:pre;-webkit-text-stroke:0.15px #fff;transform:scaleX(1.0328);transform-origin:0 0;">Plain Text</div>
<svg style="left:910.4px;top:546.6px" width="7.4" height="6.6" viewBox="0 0 7.4 6.6" fill="none" stroke="#fff" stroke-width="0.7"><path d="M0.6 0.6l6.2 5.6M2 3.6c0-1.6 1-2.2 2-2.2s2 0.6 2 2.2v2H2z"/></svg>
<svg style="left:927.8px;top:546.6px" width="5.4" height="6.6" viewBox="0 0 5.4 6.6" fill="none" stroke="#fff" stroke-width="0.7"><path d="M0.8 4.9V2.9a1.9 1.9 0 0 1 3.8 0v2l0.5 0.5H0.3zM2 6.1h1.4"/></svg>
<div style="left:0px;top:555.4px;width:15.3px;height:0.8px;background:#4a4a4a"></div>
</body></html>
